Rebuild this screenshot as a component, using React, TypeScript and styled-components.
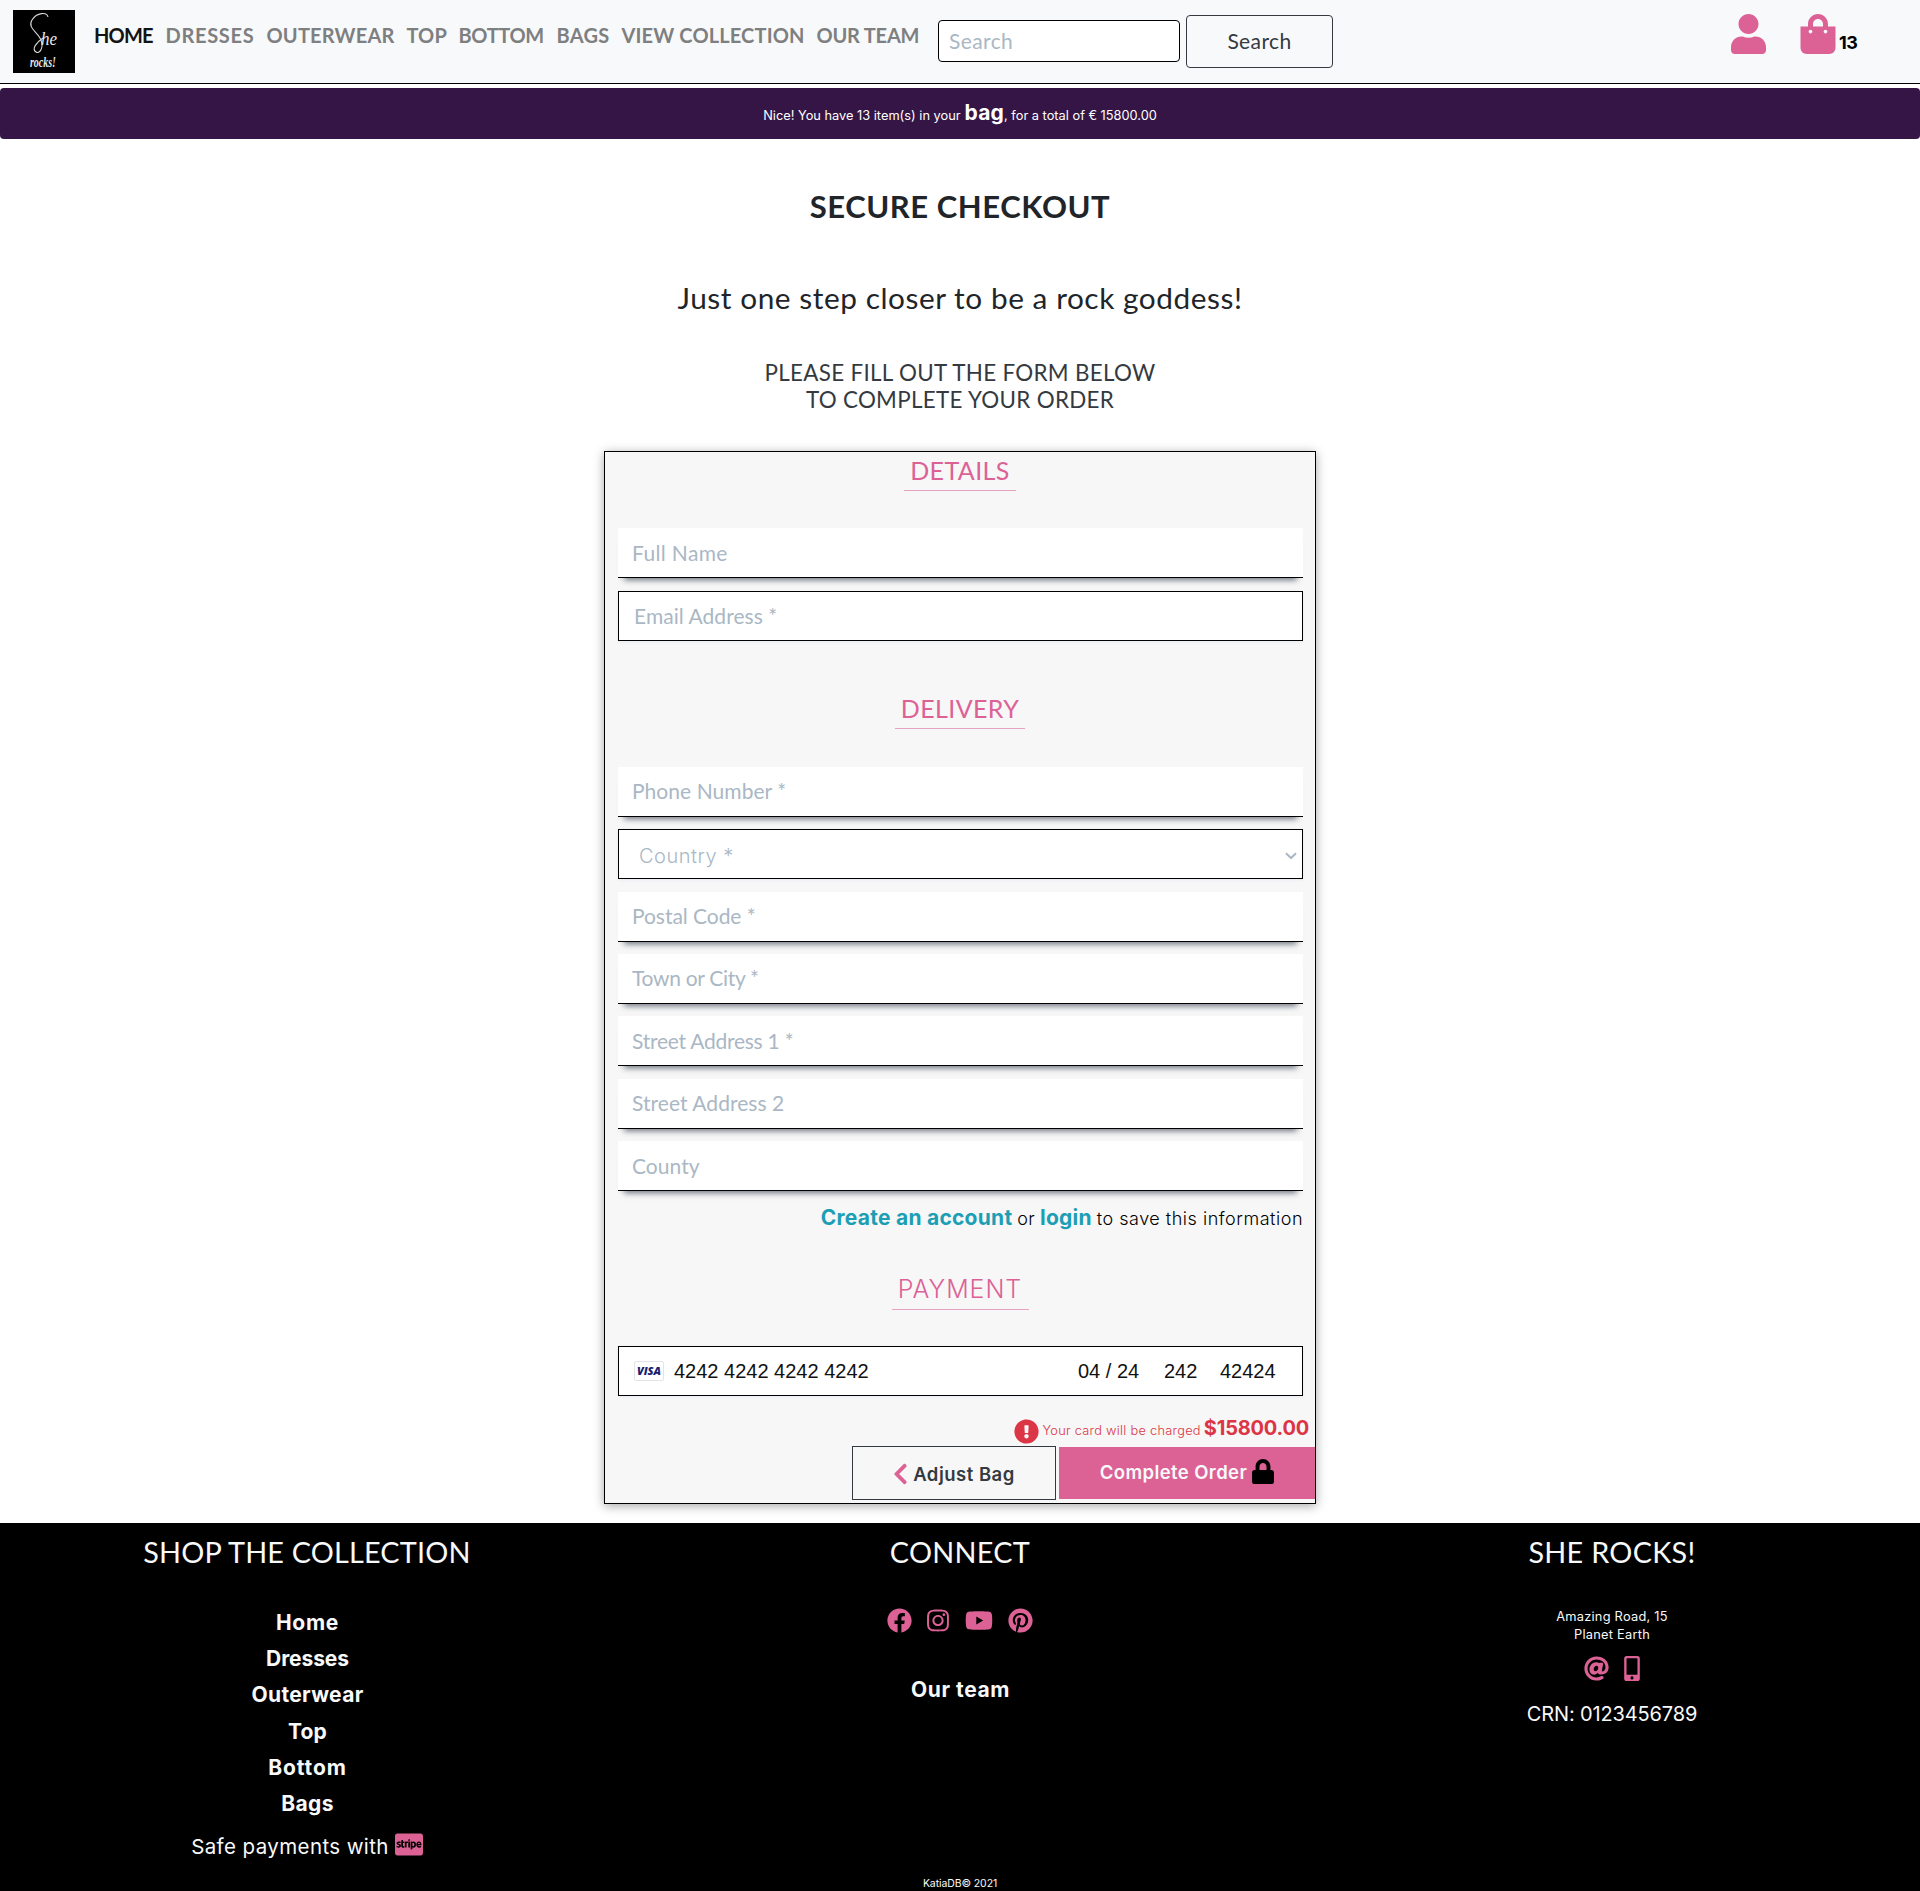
import React from 'react';
import styled, { createGlobalStyle } from 'styled-components';
import {
  FaUser, FaShoppingBag, FaExclamationCircle, FaChevronLeft, FaLock, FaFacebook,
  FaInstagram, FaYoutube, FaPinterest, FaAt, FaMobileAlt, FaCcStripe,
} from 'react-icons/fa';

const pink = '#dc6296';
const heading = 'Lato, "Open Sans", sans-serif';
const copy = 'Inter, "Open Sans", sans-serif';

const GlobalStyle = createGlobalStyle`
  *, *::before, *::after { box-sizing: border-box; }
  body { margin: 0; background: #fff; color: #212529; font-family: ${copy}; overflow-x: hidden; }
  svg { display: block; flex: none; }
`;

const Header = styled.header`
  display: flex;
  align-items: flex-start;
  height: 84px;
  padding-left: 13px;
  background: #f8f9fb;
  border-bottom: 1px solid #000;
`;
const Logo = styled.svg`
  width: 62px;
  height: 63px;
  margin-top: 10px;
  background: #000;
`;
const Nav = styled.nav`
  display: flex;
  margin: 20px 0 0 19px;
  width: 844px;
`;
const NavLink = styled.a<{ $w: number; $ls: number; $active?: boolean }>`
  width: ${p => p.$w}px;
  flex: none;
  font: 700 20px/30px ${heading};
  letter-spacing: ${p => p.$ls}px;
  color: ${p => (p.$active ? '#141414' : '#7e7f80')};
  white-space: nowrap;
`;
const SearchInput = styled.input`
  width: 242px;
  height: 42px;
  margin-top: 20px;
  padding: 0 10px 2px;
  border: 1px solid #000;
  border-radius: 4px;
  background: #fff;
  font: 400 21px ${heading};
  letter-spacing: 0.4px;
  &::placeholder { color: #aab7c4; opacity: 1; }
`;
const SearchButton = styled.button`
  width: 147px;
  height: 53px;
  margin: 15px 0 0 6px;
  padding: 0 0 3px;
  border: 1px solid #343a40;
  border-radius: 4px;
  background: transparent;
  color: #343a40;
  font: 400 21px ${heading};
  letter-spacing: 0.4px;
`;
const Account = styled.div`
  display: flex;
  align-items: flex-start;
  margin: 14px 61px 0 auto;
  color: ${pink};
`;
const BagLink = styled.a`
  display: flex;
  align-items: flex-start;
  gap: 3px;
  margin-left: 34px;
`;
const Count = styled.span`
  margin-top: 18px;
  width: 20px;
  font: 700 18px/22px ${copy};
  letter-spacing: -0.5px;
  color: #000;
`;

const Banner = styled.div`
  display: flex;
  justify-content: center;
  align-items: baseline;
  height: 51px;
  margin-top: 4px;
  padding-top: 10px;
  border-radius: 4px;
  background: #351545;
  color: #fff;
`;
const Text = styled.span<{ $s: number; $wt?: number; $ls?: number; $c?: string; $ml?: number }>`
  font: ${p => p.$wt ?? 400} ${p => p.$s}px/30px ${copy};
  letter-spacing: ${p => p.$ls ?? 0}px;
  color: ${p => p.$c ?? 'inherit'};
  margin-left: ${p => p.$ml ?? 0}px;
  white-space: nowrap;
`;

const Main = styled.main`
  display: flex;
  flex-direction: column;
  align-items: center;
  text-align: center;
  font-family: ${heading};
`;
const Title = styled.h1`
  margin: 49px 0 0;
  font-size: 31px;
  font-weight: 700;
  line-height: 37px;
  letter-spacing: 0.55px;
`;
const Tagline = styled.h2`
  margin: 56px 0 0;
  font-size: 29.8px;
  font-weight: 400;
  line-height: 34px;
  letter-spacing: 0.55px;
`;
const Instructions = styled.p`
  margin: 44px 0 38px;
  font-size: 22.4px;
  line-height: 27px;
  letter-spacing: 0.3px;
  color: #343a40;
`;

const Form = styled.form`
  display: flex;
  flex-direction: column;
  width: 712px;
  height: 1053px;
  padding: 3px 12px 0 13px;
  border: 1px solid #000;
  background: #f7f7f7;
  box-shadow: 0 2px 10px rgba(0, 0, 0, 0.35);
`;
const Legend = styled.h3<{ $w: number; $mt?: number; $mb?: number; $ls: number; $f?: string; $wt?: number }>`
  align-self: center;
  width: ${p => p.$w}px;
  height: 36px;
  margin: ${p => p.$mt ?? 0}px 1px ${p => p.$mb ?? 37}px 0;
  border-bottom: 1px solid #e8a3c4;
  font: ${p => p.$wt ?? 400} 25px/30px ${p => p.$f ?? heading};
  letter-spacing: ${p => p.$ls}px;
  color: ${pink};
`;
const Field = styled.input<{ $boxed?: boolean; $ls?: number }>`
  width: 685px;
  height: 50px;
  flex: none;
  margin: 0 0 12.4px;
  padding: ${p => (p.$boxed ? '0 14px 1px 15px' : '0 14px 1px')};
  border: ${p => (p.$boxed ? '1px solid #000' : '0')};
  border-bottom: 1px solid #000;
  border-radius: 0;
  background: #fff;
  box-shadow: ${p => (p.$boxed ? '0 1px 3px #e6ebf1' : '0 8px 6px -6px #6b727d')};
  font: 400 21px ${heading};
  letter-spacing: ${p => p.$ls ?? 0.05}px;
  &::placeholder { color: #aab7c4; opacity: 1; }
`;
const SelectBox = styled.div`
  display: flex;
  align-items: center;
  justify-content: space-between;
  width: 685px;
  height: 50px;
  flex: none;
  margin-bottom: 12.4px;
  padding: 3px 5px 0 20px;
  border: 1px solid #000;
  background: #fff;
  box-shadow: 0 1px 3px #e6ebf1;
  font: 300 20px ${copy};
  letter-spacing: 0.5px;
  color: #aab7c4;
`;
const InlineRow = styled.div<{ $mt: number; $mr?: number }>`
  display: flex;
  justify-content: flex-end;
  align-items: baseline;
  height: 30px;
  margin: ${p => p.$mt}px ${p => p.$mr ?? 0}px 0 0;
  color: #000;
`;
const CardBox = styled.div`
  display: flex;
  align-items: center;
  width: 685px;
  height: 50px;
  flex: none;
  padding: 1px 26px 0 15px;
  border: 1px solid #000;
  background: #fff;
  box-shadow: 0 1px 3px #e6ebf1;
  font: 20px "Liberation Sans", sans-serif;
  color: #111;
  white-space: nowrap;
`;
const Visa = styled.span`
  width: 30px;
  height: 20px;
  margin: -2px 10px 0 0;
  border: 1px solid #e3e4e8;
  border-radius: 2px;
  font: italic 800 11px/18px "Open Sans", sans-serif;
  color: #191e6e;
  text-align: center;
`;
const CardPart = styled.span<{ $w: number; $auto?: boolean }>`
  width: ${p => p.$w}px;
  margin-left: ${p => (p.$auto ? 'auto' : '0')};
  text-align: left;
`;
const AlertIcon = styled(FaExclamationCircle)`
  align-self: flex-start;
  margin: 6px 4px 0 0;
  width: 25px;
  height: 25px;
  color: #dc3545;
`;
const Actions = styled.div`
  display: flex;
  justify-content: flex-end;
  align-items: center;
  gap: 3px;
  margin: 3px -12px 0 0;
`;
const ActionButton = styled.button<{ $solid?: boolean }>`
  display: flex;
  align-items: center;
  justify-content: center;
  gap: 5px;
  width: ${p => (p.$solid ? 256 : 204)}px;
  height: ${p => (p.$solid ? 52 : 54)}px;
  padding: ${p => (p.$solid ? '0 0 3px' : '2px 0 0')};
  border: ${p => (p.$solid ? '0' : '1px solid #343a40')};
  background: ${p => (p.$solid ? pink : 'transparent')};
  color: ${p => (p.$solid ? '#f8f9fa' : '#343a40')};
  font: 600 18.5px/24px ${copy};
  letter-spacing: ${p => (p.$solid ? 0.4 : 0.5)}px;
`;

const Footer = styled.footer`
  height: 368px;
  margin-top: 19px;
  background: #000;
  color: #f8f9fa;
  text-align: center;
`;
const Columns = styled.div`
  display: flex;
  height: 353px;
`;
const Column = styled.div<{ $w: number }>`
  display: flex;
  flex-direction: column;
  align-items: center;
  width: ${p => p.$w}px;
  padding-top: 12px;
`;
const FooterTitle = styled.h4<{ $ls: number }>`
  margin: 0;
  font: 400 28.8px/35px ${heading};
  letter-spacing: ${p => p.$ls}px;
`;
const FooterLinks = styled.div`
  display: flex;
  flex-direction: column;
  margin: 35px 0 9px;
`;
const FooterLink = styled.a<{ $ls: number }>`
  padding-left: 1px;
  font: 700 21px/36.2px ${copy};
  letter-spacing: ${p => p.$ls}px;
`;
const SafePay = styled.div`
  display: flex;
  gap: 6px;
  margin-top: 1px;
  font: 400 20.5px/30px ${copy};
  letter-spacing: 0.4px;
  svg { color: ${pink}; }
`;
const IconRow = styled.div<{ $mt: number; $gap: number; $mb: number }>`
  display: flex;
  gap: ${p => p.$gap}px;
  height: 25px;
  align-items: center;
  margin: ${p => p.$mt}px 0 ${p => p.$mb}px;
  color: ${pink};
`;
const Address = styled.address`
  margin-top: 38px;
  font: normal 400 12.8px/18px ${copy};
  letter-spacing: 0.25px;
`;
const Copyright = styled.div`
  font: 400 10.5px/15px ${copy};
  letter-spacing: -0.1px;
`;

const nav: [string, number, number][] = [
  ['HOME', 71.5, -0.8], ['DRESSES', 101, 0.7], ['OUTERWEAR', 140, 0.2], ['TOP', 52, 0.1],
  ['BOTTOM', 98, -0.35], ['BAGS', 65, 0.3], ['VIEW COLLECTION', 195, 0.15], ['OUR TEAM', 108, -0.2],
];
const links: [string, number][] = [
  ['Home', 0.7], ['Dresses', -0.1], ['Outerwear', 0.35], ['Top', 0.2], ['Bottom', 0.9], ['Bags', 0.4],
];

export default function App() {
  return (
    <>
      <GlobalStyle />
      <Header>
        <Logo viewBox="0 0 62 63" fill="#e8e8e8">
          <path
            d="M35 7C34 2 24 2 19 10C14 18 25 22 28 30C31 39 26 44 23 42C18 39 24 32 30 28"
            fill="none"
            stroke="#d8d8d8"
            strokeWidth="1.1"
          />
          <text x="28" y="35" fontFamily="Liberation Serif, serif" fontStyle="italic" fontSize="18" textLength="16" lengthAdjust="spacingAndGlyphs">he</text>
          <text x="17" y="57" fontFamily="Liberation Serif, serif" fontStyle="italic" fontWeight="700" fontSize="14" textLength="26" lengthAdjust="spacingAndGlyphs">rocks!</text>
        </Logo>
        <Nav>
          {nav.map(([label, w, ls], i) => (
            <NavLink key={label} $w={w} $ls={ls} $active={i === 0}>{label}</NavLink>
          ))}
        </Nav>
        <SearchInput placeholder="Search" />
        <SearchButton>Search</SearchButton>
        <Account>
          <FaUser style={{ width: 35, height: 40 }} />
          <BagLink>
            <FaShoppingBag style={{ width: 36, height: 40 }} />
            <Count>13</Count>
          </BagLink>
        </Account>
      </Header>

      <Banner>
        <Text $s={12.8}>Nice! You have 13 item(s) in your</Text>
        <Text $s={21} $wt={700} $ls={0.2} $ml={4}>bag</Text>
        <Text $s={12.8}>, for a total of € 15800.00</Text>
      </Banner>

      <Main>
        <Title>SECURE CHECKOUT</Title>
        <Tagline>Just one step closer to be a rock goddess!</Tagline>
        <Instructions>PLEASE FILL OUT THE FORM BELOW<br />TO COMPLETE YOUR ORDER</Instructions>

        <Form>
          <Legend $w={112} $mb={37.4} $ls={0.4}>DETAILS</Legend>
          <Field placeholder="Full Name" $ls={0.35} />
          <Field placeholder="Email Address *" $boxed />
          <Legend $w={130} $mt={39.6} $mb={38} $ls={0.4}>DELIVERY</Legend>
          <Field placeholder="Phone Number *" />
          <SelectBox>
            Country *
            <svg width="12" height="8" viewBox="0 0 12 8" fill="none" stroke="#aab7c4" strokeWidth="2">
              <path d="M1 1.2L6 6L11 1.2" />
            </svg>
          </SelectBox>
          <Field placeholder="Postal Code *" $ls={-0.05} />
          <Field placeholder="Town or City *" $ls={-0.3} />
          <Field placeholder="Street Address 1 *" $ls={-0.25} />
          <Field placeholder="Street Address 2" />
          <Field placeholder="County" />
          <InlineRow $mt={-1}>
            <Text $s={21} $wt={700} $ls={0.25} $c="#1c9eb5">Create an account</Text>
            <Text $s={18} $wt={300} $ls={0.3} $ml={5}>or</Text>
            <Text $s={21} $wt={700} $ls={0.2} $c="#1c9eb5" $ml={5}>login</Text>
            <Text $s={18} $wt={300} $ls={0.52} $ml={5}>to save this information</Text>
          </InlineRow>
          <Legend $w={137} $mt={41.5} $mb={36} $ls={0.95} $f={copy} $wt={300}>PAYMENT</Legend>
          <CardBox>
            <Visa>VISA</Visa>
            <span>4242 4242 4242 4242</span>
            <CardPart $w={86} $auto>04 / 24</CardPart>
            <CardPart $w={56}>242</CardPart>
            <CardPart $w={56}>42424</CardPart>
          </CardBox>
          <InlineRow $mt={17} $mr={-6}>
            <AlertIcon />
            <Text $s={12.8} $wt={300} $ls={0.27} $c="#dc3545">Your card will be charged</Text>
            <Text $s={20} $wt={700} $ls={-0.2} $c="#dc3545" $ml={3}>$15800.00</Text>
          </InlineRow>
          <Actions>
            <ActionButton type="button">
              <FaChevronLeft style={{ width: 15, height: 24, color: pink }} />
              Adjust Bag
            </ActionButton>
            <ActionButton type="button" $solid>
              Complete Order
              <FaLock style={{ width: 22, height: 25, color: '#000' }} />
            </ActionButton>
          </Actions>
        </Form>
      </Main>

      <Footer>
        <Columns>
          <Column $w={614}>
            <FooterTitle $ls={0.2}>SHOP THE COLLECTION</FooterTitle>
            <FooterLinks>
              {links.map(([label, ls]) => <FooterLink key={label} $ls={ls}>{label}</FooterLink>)}
            </FooterLinks>
            <SafePay>
              Safe payments with
              <FaCcStripe style={{ width: 28, height: 25 }} />
            </SafePay>
          </Column>
          <Column $w={692}>
            <FooterTitle $ls={0.3}>CONNECT</FooterTitle>
            <IconRow $mt={38} $gap={15.6} $mb={39}>
              <FaFacebook size={25} />
              <FaInstagram style={{ width: 22, height: 25 }} />
              <FaYoutube style={{ width: 28, height: 25 }} />
              <FaPinterest size={25} />
            </IconRow>
            <FooterLink $ls={0.6}>Our team</FooterLink>
          </Column>
          <Column $w={612}>
            <FooterTitle $ls={0.3}>SHE ROCKS!</FooterTitle>
            <Address>Amazing Road, 15<br />Planet Earth</Address>
            <IconRow $mt={12} $gap={15.5} $mb={18}>
              <FaAt size={25} />
              <FaMobileAlt style={{ width: 16, height: 25 }} />
            </IconRow>
            <Text $s={20} $ls={-0.15}>CRN: 0123456789</Text>
          </Column>
        </Columns>
        <Copyright>KatiaDB© 2021</Copyright>
      </Footer>
    </>
  );
}
